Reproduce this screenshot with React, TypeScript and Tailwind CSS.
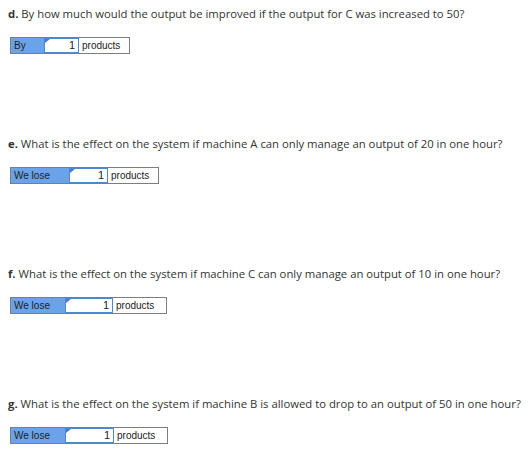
import React from 'react';

interface Part {
  letter: string;
  question: string;
  label: string;
  labelW: number;
  inputW: number;
  unitW: number;
}

const parts: Part[] = [
  {
    letter: 'd.',
    question: 'By how much would the output be improved if the output for C was increased to 50?',
    label: 'By',
    labelW: 33,
    inputW: 35,
    unitW: 50,
  },
  {
    letter: 'e.',
    question: 'What is the effect on the system if machine A can only manage an output of 20 in one hour?',
    label: 'We lose',
    labelW: 58,
    inputW: 39,
    unitW: 50,
  },
  {
    letter: 'f.',
    question: 'What is the effect on the system if machine C can only manage an output of 10 in one hour?',
    label: 'We lose',
    labelW: 54,
    inputW: 48,
    unitW: 53,
  },
  {
    letter: 'g.',
    question: 'What is the effect on the system if machine B is allowed to drop to an output of 50 in one hour?',
    label: 'We lose',
    labelW: 54,
    inputW: 49,
    unitW: 53,
  },
];

const AnswerRow: React.FC<{ part: Part }> = ({ part }) => (
  <div className="flex h-[17px] w-fit border border-[#7d7d7d] font-['Liberation_Sans',Arial,sans-serif] text-[10px] text-[#222]">
    <div className="flex items-center bg-[#6aa3e8] pl-[3px]" style={{ width: part.labelW }}>
      {part.label}
    </div>
    <div
      className="relative flex items-center justify-end border border-[#4b87d3] bg-white pr-[3px] text-[11px]"
      style={{ width: part.inputW }}
    >
      <svg className="absolute left-0 top-0" width="5" height="4" viewBox="0 0 5 4">
        <path d="M0 0 L5 0 L0 4 Z" fill="#3f7fd0" />
      </svg>
      1
    </div>
    <div className="flex items-center bg-white pl-[3px]" style={{ width: part.unitW }}>
      products
    </div>
  </div>
);

export default function App() {
  return (
    <div className="bg-white pl-[8px] pt-[6px] font-['Open_Sans','Lato',sans-serif] text-[11.3px] text-[#333]">
      {parts.map((part) => (
        <div key={part.letter} className="h-[130px] last:h-auto">
          <p className="leading-[16px]">
            <span className="font-bold">{part.letter}</span> {part.question}
          </p>
          <div className="mt-[15px] ml-[2px]">
            <AnswerRow part={part} />
          </div>
        </div>
      ))}
    </div>
  );
}
